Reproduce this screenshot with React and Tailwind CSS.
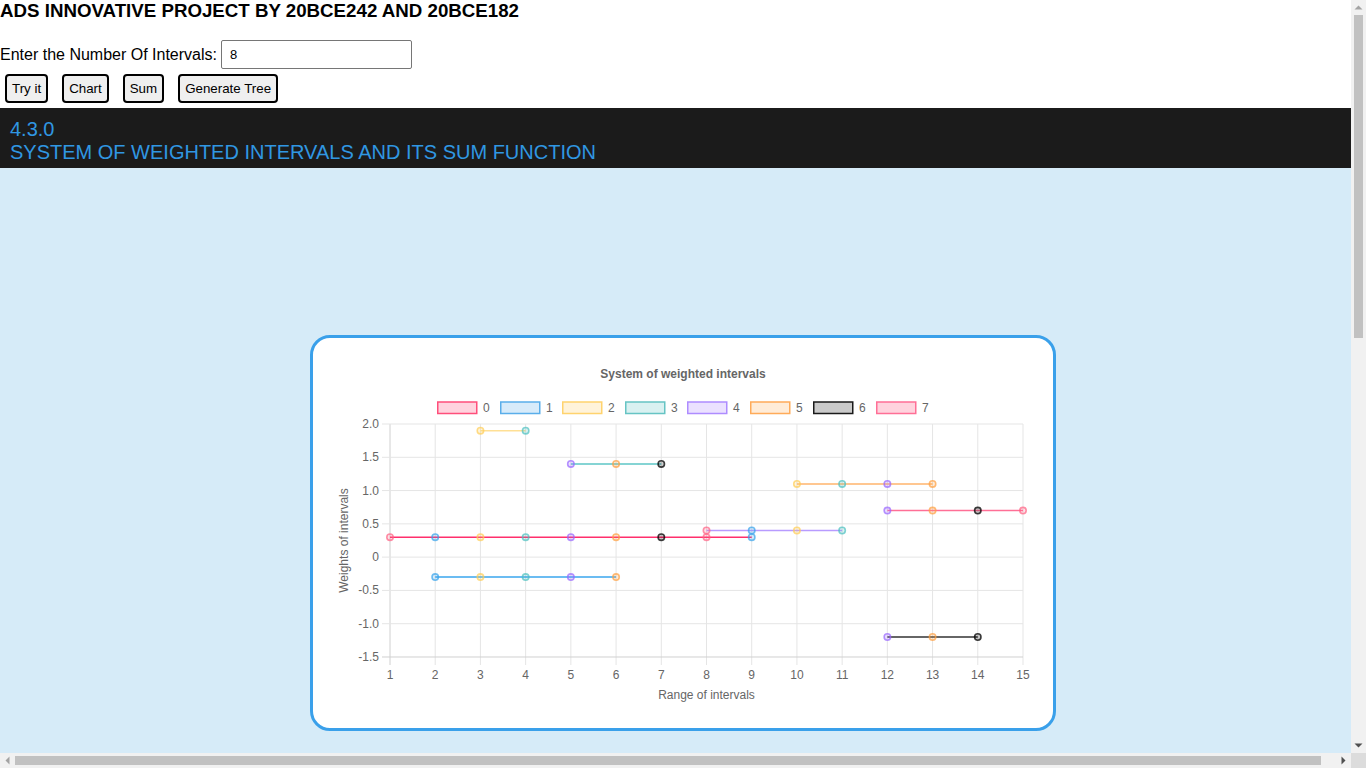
import { useState } from 'react';

const X0 = 390;
const XSTEP = (1023 - 390) / 14;
const Y0 = 556.14;
const YUNIT = 66.57;

const px = (x) => X0 + (x - 1) * XSTEP;
const py = (y) => Y0 - y * YUNIT;

// point colours cycle with the x value
const pointColors = ['#ff6384', '#36a2eb', '#ffcd56', '#4bc0c0', '#9966ff', '#ff9f40', '#000000'];

const datasets = [
  { from: 1, to: 9, y: 0.3, line: '#ff2f6c', box: '#ffd3de', border: '#ff4f7b' },
  { from: 2, to: 6, y: -0.3, line: '#3aa6ee', box: '#d7ebfa', border: '#5aaeea' },
  { from: 3, to: 4, y: 1.9, line: '#ffe095', box: '#fff3da', border: '#ffd36e' },
  { from: 5, to: 7, y: 1.4, line: '#5cc6c6', box: '#d9f1f1', border: '#66c4c4' },
  { from: 8, to: 11, y: 0.4, line: '#b89bff', box: '#ebe1ff', border: '#ae8cff' },
  { from: 10, to: 13, y: 1.1, line: '#ffb46c', box: '#ffecd8', border: '#ffab59' },
  { from: 12, to: 14, y: -1.2, line: '#333333', box: '#cacaca', border: '#1a1a1a' },
  { from: 12, to: 15, y: 0.7, line: '#ff6f96', box: '#ffd3de', border: '#ff6f96' },
];

const legendX = [437, 500, 562, 625, 687, 750, 813, 876];
const yTicks = [
  [2, '2.0'], [1.5, '1.5'], [1, '1.0'], [0.5, '0.5'], [0, '0'],
  [-0.5, '-0.5'], [-1, '-1.0'], [-1.5, '-1.5'],
];

function Chart() {
  const xs = Array.from({ length: 15 }, (_, i) => i + 1);
  return (
    <svg width="740" height="390" viewBox="313 337 740 390" className="block" style={{ fontFamily: '"Liberation Sans", Arial, sans-serif' }}>
      <text x="683" y="377" textAnchor="middle" fontSize="12" fontWeight="bold" fill="#666">System of weighted intervals</text>

      {datasets.map((d, i) => (
        <g key={i}>
          <rect x={legendX[i] + 0.75} y="401" width="39" height="11.5" fill={d.box} stroke={d.border} strokeWidth="1.5" />
          <text x={legendX[i] + 46} y="411" fontSize="12" fill="#666">{i}</text>
        </g>
      ))}

      {/* grid */}
      {xs.map((x) => (
        <line key={'v' + x} x1={px(x)} x2={px(x)} y1="423" y2="664" stroke={x === 1 ? '#d0d0d0' : '#e5e5e5'} strokeWidth="1" />
      ))}
      {yTicks.map(([v]) => (
        <line key={'h' + v} x1="382" x2="1023" y1={py(v)} y2={py(v)} stroke={v === -1.5 ? '#d0d0d0' : '#e5e5e5'} strokeWidth="1" />
      ))}

      {yTicks.map(([v, t]) => (
        <text key={'yt' + v} x="379" y={py(v) + 4} textAnchor="end" fontSize="12" fill="#666">{t}</text>
      ))}
      {xs.map((x) => (
        <text key={'xt' + x} x={px(x)} y="677.5" textAnchor="middle" fontSize="12" fill="#666">{x}</text>
      ))}

      <text x="706.5" y="698" textAnchor="middle" fontSize="12" fill="#666">Range of intervals</text>
      <text x="348" y="539.5" textAnchor="middle" fontSize="12" fill="#666" transform="rotate(-90 348 539.5)">Weights of intervals</text>

      {/* intervals */}
      {datasets.map((d, i) => (
        <line key={'l' + i} x1={px(d.from)} x2={px(d.to)} y1={py(d.y)} y2={py(d.y)} stroke={d.line} strokeWidth="1.5" />
      ))}
      {datasets.map((d, i) =>
        Array.from({ length: d.to - d.from + 1 }, (_, k) => d.from + k).map((x) => {
          const c = pointColors[(x - 1) % 7];
          return (
            <circle key={'p' + i + '-' + x} cx={px(x)} cy={py(d.y)} r="3.2" fill={c} fillOpacity="0.2" stroke={c} strokeOpacity={c === '#000000' ? 0.75 : 0.7} strokeWidth="1.6" />
          );
        })
      )}
    </svg>
  );
}

// the browser scrollbars seen in the screenshot
function Scrollbars() {
  return (
    <>
      <div className="fixed right-0 top-0 w-[15px] h-[753px] bg-[#f1f1f1] flex flex-col items-center">
        <svg width="15" height="15" viewBox="0 0 15 15"><path d="M3.5 9.5 L7.5 5.5 L11.5 9.5 Z" fill="#a3a3a3" /></svg>
        <div className="w-[9px] h-[323px] bg-[#c1c1c1]" />
        <div className="flex-1" />
        <svg width="15" height="15" viewBox="0 0 15 15"><path d="M3.5 5.5 L7.5 9.5 L11.5 5.5 Z" fill="#505050" /></svg>
      </div>
      <div className="fixed left-0 bottom-0 w-[1351px] h-[15px] bg-[#f1f1f1] flex items-center">
        <svg width="15" height="15" viewBox="0 0 15 15"><path d="M9.5 3.5 L5.5 7.5 L9.5 11.5 Z" fill="#a3a3a3" /></svg>
        <div className="w-[1306px] h-[9px] bg-[#c1c1c1]" />
        <div className="flex-1" />
        <svg width="15" height="15" viewBox="0 0 15 15"><path d="M5.5 3.5 L9.5 7.5 L5.5 11.5 Z" fill="#505050" /></svg>
      </div>
      <div className="fixed right-0 bottom-0 w-[15px] h-[15px] bg-[#dcdcdc]" />
    </>
  );
}

export default function App() {
  const [count, setCount] = useState('8');

  return (
    <div className="w-screen bg-white text-black font-['Liberation_Sans',Arial,sans-serif]">
      <h3 className="text-[18.72px] font-bold leading-[21px]">ADS INNOVATIVE PROJECT BY 20BCE242 AND 20BCE182</h3>

      <div className="mt-[19px] flex items-center h-[29px]">
        <label className="text-[16px] leading-[18px]">Enter the Number Of Intervals:</label>
        <input
          type="text"
          value={count}
          onChange={(e) => setCount(e.target.value)}
          className="ml-[4px] w-[191px] h-[29px] border border-[#767676] rounded-[2px] px-[8px] text-[13px] outline-none"
        />
      </div>

      <div className="mt-[5px] ml-[5px] flex gap-[14px] text-[13.33px]">
        <button className="h-[29px] px-[5px] border-2 border-black rounded-[4px] bg-[#efefef]">Try it</button>
        <button className="h-[29px] px-[5px] border-2 border-black rounded-[4px] bg-[#efefef]">Chart</button>
        <button className="h-[29px] px-[5px] border-2 border-black rounded-[4px] bg-[#efefef]">Sum</button>
        <button className="h-[29px] px-[5px] border-2 border-black rounded-[4px] bg-[#efefef]">Generate Tree</button>
      </div>

      <div className="mt-[5px] h-[60px] bg-[#1b1b1b] pl-[10px] pt-[10px] text-[20px] leading-[23px] text-[#3097e2]">
        <div>4.3.0</div>
        <div>SYSTEM OF WEIGHTED INTERVALS AND ITS SUM FUNCTION</div>
      </div>

      <div className="bg-[#d6ebf8] pt-[167px] min-h-[1492px]">
        <div className="mx-auto w-[746px] h-[396px] border-[3px] border-[#3aa0ea] rounded-[20px] bg-white overflow-hidden">
          <Chart />
        </div>
      </div>

      <Scrollbars />
    </div>
  );
}
